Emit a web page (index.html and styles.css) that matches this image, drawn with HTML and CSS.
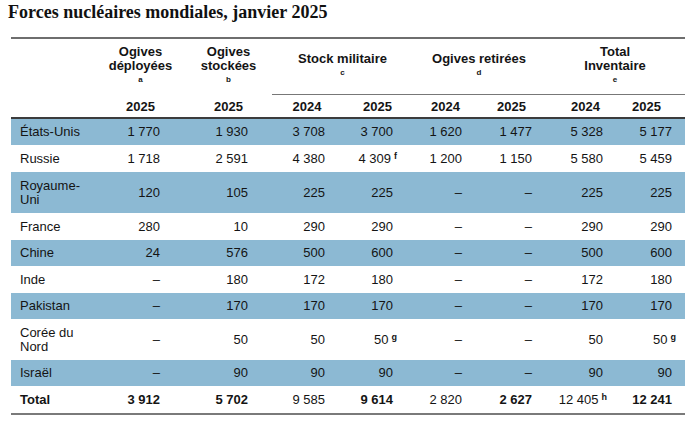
FILE: index.html
```html
<!DOCTYPE html>
<html lang="fr">
<head>
<meta charset="utf-8">
<title>Forces nucléaires mondiales, janvier 2025</title>
<link rel="stylesheet" href="styles.css">
</head>
<body>
<div class="page">
  <h1 class="title">Forces nucléaires mondiales, janvier 2025</h1>
  <table class="forces">
    <colgroup>
      <col class="c-country">
      <col class="c-w89">
      <col class="c-w87">
      <col class="c-w70">
      <col class="c-w71">
      <col class="c-w65">
      <col class="c-w67">
      <col class="c-w71">
      <col class="c-w69">
    </colgroup>
    <thead>
      <tr class="groups">
        <th></th>
        <th>Ogives<br>déployées<span class="note">a</span></th>
        <th>Ogives<br>stockées<span class="note">b</span></th>
        <th colspan="2" class="ruled">Stock militaire<span class="note">c</span></th>
        <th colspan="2" class="ruled">Ogives retirées<span class="note">d</span></th>
        <th colspan="2" class="ruled">Total<br>Inventaire<span class="note">e</span></th>
      </tr>
      <tr class="years">
        <th></th>
        <th>2025</th>
        <th>2025</th>
        <th>2024</th>
        <th>2025</th>
        <th>2024</th>
        <th>2025</th>
        <th>2024</th>
        <th>2025</th>
      </tr>
    </thead>
    <tbody>
      <tr class="shade">
        <td>États-Unis</td><td>1&nbsp;770</td><td>1&nbsp;930</td><td>3&nbsp;708</td><td>3&nbsp;700</td><td>1&nbsp;620</td><td>1&nbsp;477</td><td>5&nbsp;328</td><td>5&nbsp;177</td>
      </tr>
      <tr>
        <td>Russie</td><td>1&nbsp;718</td><td>2&nbsp;591</td><td>4&nbsp;380</td><td>4&nbsp;309<span class="ref">f</span></td><td>1&nbsp;200</td><td>1&nbsp;150</td><td>5&nbsp;580</td><td>5&nbsp;459</td>
      </tr>
      <tr class="shade double">
        <td>Royaume-<br>Uni</td><td>120</td><td>105</td><td>225</td><td>225</td><td>–</td><td>–</td><td>225</td><td>225</td>
      </tr>
      <tr>
        <td>France</td><td>280</td><td>10</td><td>290</td><td>290</td><td>–</td><td>–</td><td>290</td><td>290</td>
      </tr>
      <tr class="shade">
        <td>Chine</td><td>24</td><td>576</td><td>500</td><td>600</td><td>–</td><td>–</td><td>500</td><td>600</td>
      </tr>
      <tr>
        <td>Inde</td><td>–</td><td>180</td><td>172</td><td>180</td><td>–</td><td>–</td><td>172</td><td>180</td>
      </tr>
      <tr class="shade">
        <td>Pakistan</td><td>–</td><td>170</td><td>170</td><td>170</td><td>–</td><td>–</td><td>170</td><td>170</td>
      </tr>
      <tr class="double">
        <td>Corée du<br>Nord</td><td>–</td><td>50</td><td>50</td><td>50<span class="ref">g</span></td><td>–</td><td>–</td><td>50</td><td>50<span class="ref">g</span></td>
      </tr>
      <tr class="shade">
        <td>Israël</td><td>–</td><td>90</td><td>90</td><td>90</td><td>–</td><td>–</td><td>90</td><td>90</td>
      </tr>
      <tr class="total">
        <td class="b">Total</td><td class="b">3&nbsp;912</td><td class="b">5&nbsp;702</td><td>9&nbsp;585</td><td class="b">9&nbsp;614</td><td>2&nbsp;820</td><td class="b">2&nbsp;627</td><td>12&nbsp;405<span class="ref">h</span></td><td class="b">12&nbsp;241</td>
      </tr>
    </tbody>
  </table>
</div>
</body>
</html>
```

FILE: styles.css
```css
html, body {
  margin: 0;
  padding: 0;
  background: #ffffff;
}

.page {
  padding: 2px 8px 0 8px;
}

.title {
  margin: 0;
  font-family: "Liberation Serif", "Times New Roman", serif;
  font-weight: bold;
  font-size: 18px;
  line-height: 20px;
  color: #111111;
}

.forces {
  margin: 15px 0 0 3px;
  width: 674px;
  table-layout: fixed;
  border-collapse: separate;
  border-spacing: 0;
  border-top: 2px solid #6e6e6e;
  border-bottom: 2px solid #7a7a7a;
  font-family: "Liberation Sans", Arial, sans-serif;
  font-size: 13px;
  line-height: 14px;
  color: #141414;
}

.c-country { width: 85px; }
.c-w89 { width: 89px; }
.c-w87 { width: 87px; }
.c-w70 { width: 70px; }
.c-w71 { width: 71px; }
.c-w65 { width: 65px; }
.c-w67 { width: 67px; }
.c-w69 { width: 69px; }

.forces th {
  font-weight: bold;
  text-align: center;
  padding: 0;
}

.groups th {
  height: 54px;
  padding: 0 0 2px 0;
  vertical-align: middle;
}

.groups th.ruled {
  border-bottom: 1px solid #777777;
  height: 53px;
}

.note {
  display: block;
  font-size: 8px;
  line-height: 14px;
}

.years th {
  padding: 5px 0 3px 0;
  border-bottom: 2px solid #3c3c3c;
}

.years th:nth-child(8) { padding-left: 10px; }
.years th:nth-child(9) { padding-right: 8px; }

.forces td {
  padding: 7px 0 6px 0;
  text-align: right;
  white-space: nowrap;
  vertical-align: middle;
}

.forces tr.shade td {
  background: #8cb9d3;
  padding-top: 6px;
  padding-bottom: 6px;
}

.forces tr.double td {
  padding-top: 7px;
  padding-bottom: 6px;
}

.forces td:nth-child(1) {
  text-align: left;
  padding-left: 9px;
  white-space: normal;
}
.forces td:nth-child(2) { padding-right: 25px; }
.forces td:nth-child(3) { padding-right: 24px; }
.forces td:nth-child(4) { padding-right: 17px; }
.forces td:nth-child(5) { padding-right: 20px; }
.forces td:nth-child(6) { padding-right: 16px; }
.forces td:nth-child(7) { padding-right: 13px; }
.forces td:nth-child(8) { padding-right: 13px; }
.forces td:nth-child(9) { padding-right: 13px; }

.forces td.b {
  font-weight: bold;
}

.ref {
  font-size: 9px;
  font-weight: bold;
  line-height: 0;
  vertical-align: 4px;
  margin-left: 3px;
  margin-right: -4px;
}
```
